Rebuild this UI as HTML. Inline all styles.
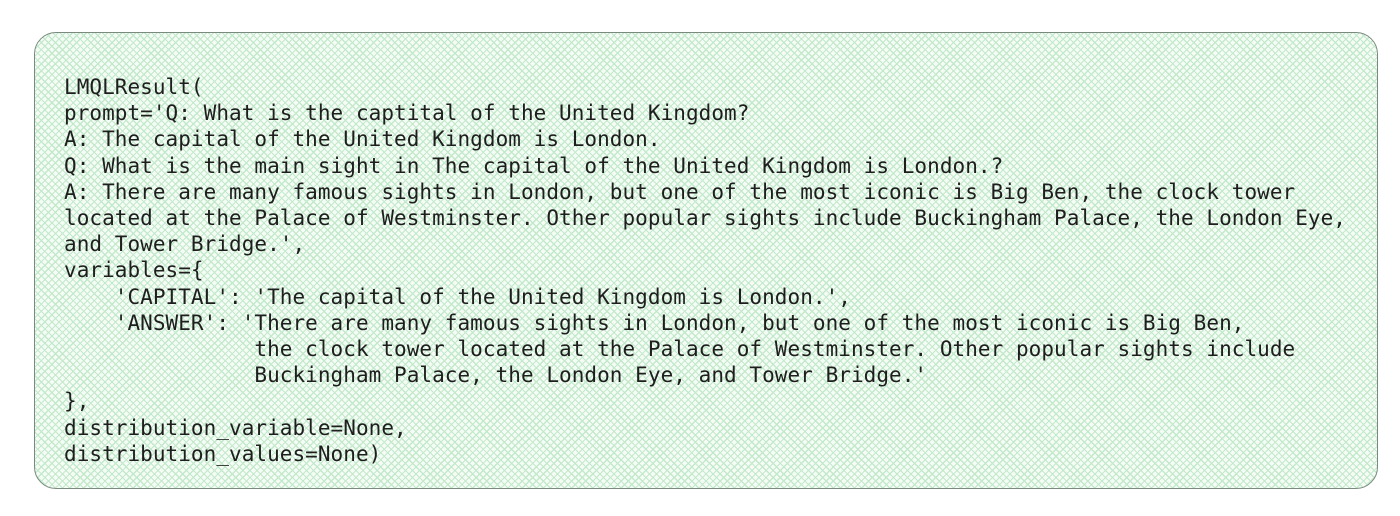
<!DOCTYPE html>
<html><head><style>
html,body{margin:0;padding:0;background:#fff;width:1400px;height:516px;overflow:hidden}
.box{position:absolute;left:34px;top:32px;width:1342px;height:455px;border:1.5px solid #7a8a7e;border-radius:22px;
background:
repeating-linear-gradient(45deg,rgba(0,0,0,0) 0 3.8px,#c2e9ca 3.8px 5px),
repeating-linear-gradient(-45deg,rgba(0,0,0,0) 0 3.8px,#c2e9ca 3.8px 5px),#f5fcf6;}
pre{position:absolute;left:64px;top:74px;margin:0;font-family:"DejaVu Sans Mono","Liberation Mono",monospace;font-size:21px;letter-spacing:0.05px;line-height:26.2px;color:#1e1e1e}
</style></head><body>
<div class="box"></div>
<pre>LMQLResult(
prompt='Q: What is the captital of the United Kingdom?
A: The capital of the United Kingdom is London.
Q: What is the main sight in The capital of the United Kingdom is London.?
A: There are many famous sights in London, but one of the most iconic is Big Ben, the clock tower
located at the Palace of Westminster. Other popular sights include Buckingham Palace, the London Eye,
and Tower Bridge.',
variables={
    'CAPITAL': 'The capital of the United Kingdom is London.',
    'ANSWER': 'There are many famous sights in London, but one of the most iconic is Big Ben,
               the clock tower located at the Palace of Westminster. Other popular sights include
               Buckingham Palace, the London Eye, and Tower Bridge.'
},
distribution_variable=None,
distribution_values=None)</pre>
</body></html>
